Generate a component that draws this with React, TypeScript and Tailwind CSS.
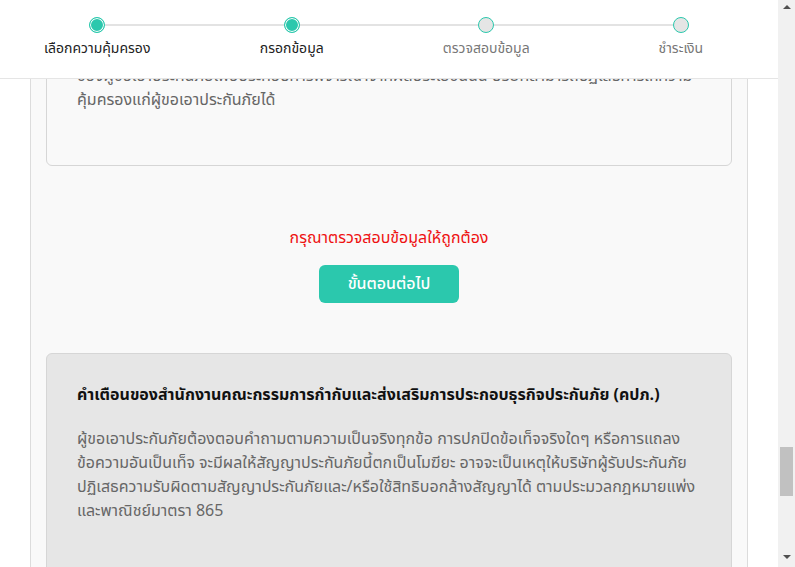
const steps = [
  { label: 'เลือกความคุ้มครอง', done: true },
  { label: 'กรอกข้อมูล', done: true },
  { label: 'ตรวจสอบข้อมูล', done: false },
  { label: 'ชำระเงิน', done: false },
];

const thaiFont = "font-['Noto_Sans_Thai','Noto_Sans','Liberation_Sans',sans-serif]";

function Stepper() {
  return (
    <div className="grid h-[79px] shrink-0 grid-cols-4 border-b border-[#e5e5e5] bg-white pt-[17px]">
      {steps.map((step, i) => (
        <div key={step.label} className="flex flex-col items-center">
          <div className="flex w-full items-center">
            <div className={`h-[2px] flex-1 ${i === 0 ? 'bg-transparent' : 'bg-[#e3e3e3]'}`} />
            {step.done ? (
              <div className="h-4 w-4 rounded-full border border-[#2bc8ad] bg-[#2bc8ad] shadow-[inset_0_0_0_1px_#fff]" />
            ) : (
              <div className="h-4 w-4 rounded-full border-[1.5px] border-[#2bc8ad] bg-[#e5e5e5]" />
            )}
            <div className={`h-[2px] flex-1 ${i === steps.length - 1 ? 'bg-transparent' : 'bg-[#e3e3e3]'}`} />
          </div>
          <span className={`mt-[6px] text-[14px] leading-5 ${step.done ? 'text-[#222]' : 'text-[#777]'}`}>
            {step.label}
          </span>
        </div>
      ))}
    </div>
  );
}

function FakeScrollbar() {
  return (
    <div className="flex h-full w-[17px] shrink-0 flex-col items-center bg-[#f1f1f1]">
      <div className="mt-[5px] h-0 w-0 border-x-[4px] border-b-[4px] border-x-transparent border-b-[#505050]" />
      <div className="mt-[438px] h-[49px] w-[13px] bg-[#c1c1c1]" />
      <div className="mt-[59px] h-0 w-0 border-x-[4px] border-t-[4px] border-x-transparent border-t-[#505050]" />
    </div>
  );
}

export default function App() {
  return (
    <div className={`flex h-[567px] w-[795px] overflow-hidden bg-white ${thaiFont}`}>
      <div className="flex w-[778px] flex-col">
        <Stepper />

        <div className="flex flex-1 overflow-hidden px-[30px]">
          <div className="flex-1 border-x border-[#dcdcdc] bg-[#f9f9f9] px-[15px]">
            <div className="-mt-[46px] flex flex-col items-center">
              {/* Consent card (scrolled past) */}
              <div className="w-full rounded-b-[6px] border border-[#d6d6d6] bg-[#f9f9f9] px-[30px] pb-[53px] pt-[30px] text-[16px] leading-6 text-[#666]">
                <p className="whitespace-nowrap">
                  ของผู้ขอเอาประกันภัยเพื่อประกอบการพิจารณาจากผลประโยชน์นั้น บริษัทสามารถปฏิเสธการให้ความ
                  <br />
                  คุ้มครองแก่ผู้ขอเอาประกันภัยได้
                </p>
              </div>

              <p className="mt-[60px] text-[16px] leading-6 text-[#ee1111]">กรุณาตรวจสอบข้อมูลให้ถูกต้อง</p>

              <button className="mt-[15px] flex h-[38px] w-[140px] items-center justify-center rounded-[6px] bg-[#2bc8ad] text-[16px] font-medium text-white">
                ขั้นตอนต่อไป
              </button>

              {/* OIC warning */}
              <div className="mt-[50px] w-full rounded-t-[6px] border border-[#d6d6d6] bg-[#e6e6e6] px-[30px] pb-[60px] pt-[31px]">
                <h3 className="text-[16px] font-bold leading-5 text-[#111]">
                  คำเตือนของสำนักงานคณะกรรมการกำกับและส่งเสริมการประกอบธุรกิจประกันภัย (คปภ.)
                </h3>
                <p className="mt-[22px] text-[16px] leading-6 text-[#666]">
                  ผู้ขอเอาประกันภัยต้องตอบคำถามตามความเป็นจริงทุกข้อ การปกปิดข้อเท็จจริงใดๆ หรือการแถลง
                  <br />
                  ข้อความอันเป็นเท็จ จะมีผลให้สัญญาประกันภัยนี้ตกเป็นโมฆียะ อาจจะเป็นเหตุให้บริษัทผู้รับประกันภัย
                  <br />
                  ปฏิเสธความรับผิดตามสัญญาประกันภัยและ/หรือใช้สิทธิบอกล้างสัญญาได้ ตามประมวลกฎหมายแพ่ง
                  <br />
                  และพาณิชย์มาตรา 865
                </p>
              </div>
            </div>
          </div>
        </div>
      </div>
      <FakeScrollbar />
    </div>
  );
}
